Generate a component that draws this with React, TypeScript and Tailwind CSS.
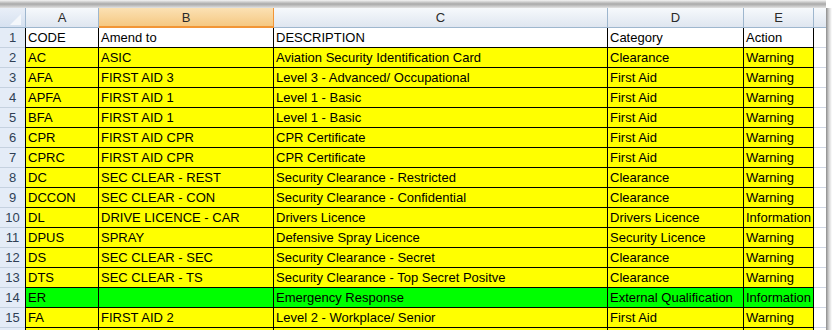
import React from "react";

type Row = { n: number; a: string; b: string; c: string; d: string; e: string; bg: string };

const rows: Row[] = [
  { n: 1, a: "CODE", b: "Amend to", c: "DESCRIPTION", d: "Category", e: "Action", bg: "bg-white" },
  { n: 2, a: "AC", b: "ASIC", c: "Aviation Security Identification Card", d: "Clearance", e: "Warning", bg: "bg-[#ffff00]" },
  { n: 3, a: "AFA", b: "FIRST AID 3", c: "Level 3 - Advanced/ Occupational", d: "First Aid", e: "Warning", bg: "bg-[#ffff00]" },
  { n: 4, a: "APFA", b: "FIRST AID 1", c: "Level 1 - Basic", d: "First Aid", e: "Warning", bg: "bg-[#ffff00]" },
  { n: 5, a: "BFA", b: "FIRST AID 1", c: "Level 1 - Basic", d: "First Aid", e: "Warning", bg: "bg-[#ffff00]" },
  { n: 6, a: "CPR", b: "FIRST AID CPR", c: "CPR Certificate", d: "First Aid", e: "Warning", bg: "bg-[#ffff00]" },
  { n: 7, a: "CPRC", b: "FIRST AID CPR", c: "CPR Certificate", d: "First Aid", e: "Warning", bg: "bg-[#ffff00]" },
  { n: 8, a: "DC", b: "SEC CLEAR - REST", c: "Security Clearance - Restricted", d: "Clearance", e: "Warning", bg: "bg-[#ffff00]" },
  { n: 9, a: "DCCON", b: "SEC CLEAR - CON", c: "Security Clearance - Confidential", d: "Clearance", e: "Warning", bg: "bg-[#ffff00]" },
  { n: 10, a: "DL", b: "DRIVE LICENCE - CAR", c: "Drivers Licence", d: "Drivers Licence", e: "Information", bg: "bg-[#ffff00]" },
  { n: 11, a: "DPUS", b: "SPRAY", c: "Defensive Spray Licence", d: "Security Licence", e: "Warning", bg: "bg-[#ffff00]" },
  { n: 12, a: "DS", b: "SEC CLEAR - SEC", c: "Security Clearance - Secret", d: "Clearance", e: "Warning", bg: "bg-[#ffff00]" },
  { n: 13, a: "DTS", b: "SEC CLEAR - TS", c: "Security Clearance - Top Secret Positve", d: "Clearance", e: "Warning", bg: "bg-[#ffff00]" },
  { n: 14, a: "ER", b: "", c: "Emergency Response", d: "External Qualification", e: "Information", bg: "bg-[#00ff00]" },
  { n: 15, a: "FA", b: "FIRST AID 2", c: "Level 2 - Workplace/ Senior", d: "First Aid", e: "Warning", bg: "bg-[#ffff00]" },
  { n: 16, a: "", b: "", c: "", d: "", e: "", bg: "bg-[#ffff00]" },
];

const cell = "h-[20px] border-r border-b border-black pl-[2px] leading-[20px] whitespace-nowrap overflow-hidden text-black";

export default function App() {
  return (
    <div
      className="w-[832px] h-[330px] overflow-hidden bg-white flex flex-col text-[13px]"
      style={{ fontFamily: '"Liberation Sans", Arial, sans-serif' }}
    >
      <div className="h-[8px] shrink-0 flex">
        <div className="w-[826px] h-full bg-gradient-to-b from-[#f4f4f4] via-[#a9a9a9] to-[#e2e2e2]" />
        <div className="w-[6px] h-full bg-white" />
      </div>
      <div className="flex flex-1 min-h-0">
        <div className="w-[826px] flex flex-col">
          <div className="flex h-[20px] shrink-0">
            <div className="w-[25px] h-[20px] bg-gradient-to-b from-[#e9eff8] to-[#d6e1f0] border-b border-[#9eb6ce] relative">
              <svg className="absolute left-0 top-0" width="25" height="20" viewBox="0 0 25 20">
                <polygon points="21,6 21,17 10,17" fill="#f4f7fb" />
              </svg>
            </div>
            <div className="w-[74px] h-[20px] border-r border-b border-l border-[#9eb6ce] bg-gradient-to-b from-[#f6f9fc] to-[#dfe6f0] text-center leading-[19px] text-[#2a2a2a]">A</div>
            <div className="w-[175px] h-[20px] border-r border-b-2 border-r-[#f29536] border-b-[#f29536] bg-gradient-to-b from-[#fbe1b3] to-[#f5c882] text-center leading-[19px] text-[#2a2a2a]">B</div>
            <div className="w-[334px] h-[20px] border-r border-b border-[#9eb6ce] bg-gradient-to-b from-[#f6f9fc] to-[#dfe6f0] text-center leading-[19px] text-[#2a2a2a]">C</div>
            <div className="w-[136px] h-[20px] border-r border-b border-[#9eb6ce] bg-gradient-to-b from-[#f6f9fc] to-[#dfe6f0] text-center leading-[19px] text-[#2a2a2a]">D</div>
            <div className="w-[70px] h-[20px] border-r border-b border-[#9eb6ce] bg-gradient-to-b from-[#f6f9fc] to-[#dfe6f0] text-center leading-[19px] text-[#2a2a2a]">E</div>
            <div className="w-[12px] h-[20px] border-b border-[#9eb6ce] bg-gradient-to-b from-[#f6f9fc] to-[#dfe6f0]" />
          </div>
          {rows.map((r) => (
            <div key={r.n} className="flex h-[20px] shrink-0">
              <div className="w-[25px] h-[20px] bg-[#e4ecf7] border-b border-[#c5d1e0] text-center leading-[20px] text-[#2f3f55]">
                {r.n < 16 ? r.n : ""}
              </div>
              <div className={`w-[74px] border-l ${cell} ${r.bg}`}>{r.a}</div>
              <div className={`w-[175px] ${cell} ${r.bg}`}>{r.b}</div>
              <div className={`w-[334px] ${cell} ${r.bg}`}>{r.c}</div>
              <div className={`w-[136px] ${cell} ${r.bg}`}>{r.d}</div>
              <div className={`w-[70px] ${cell} ${r.bg}`}>{r.e}</div>
              <div className="w-[12px] h-[20px] border-b border-[#d0d7e5] bg-white" />
            </div>
          ))}
        </div>
        <div className="w-[6px] bg-gradient-to-r from-[#8c8c8c] via-[#d4d4d4] to-white" />
      </div>
    </div>
  );
}
